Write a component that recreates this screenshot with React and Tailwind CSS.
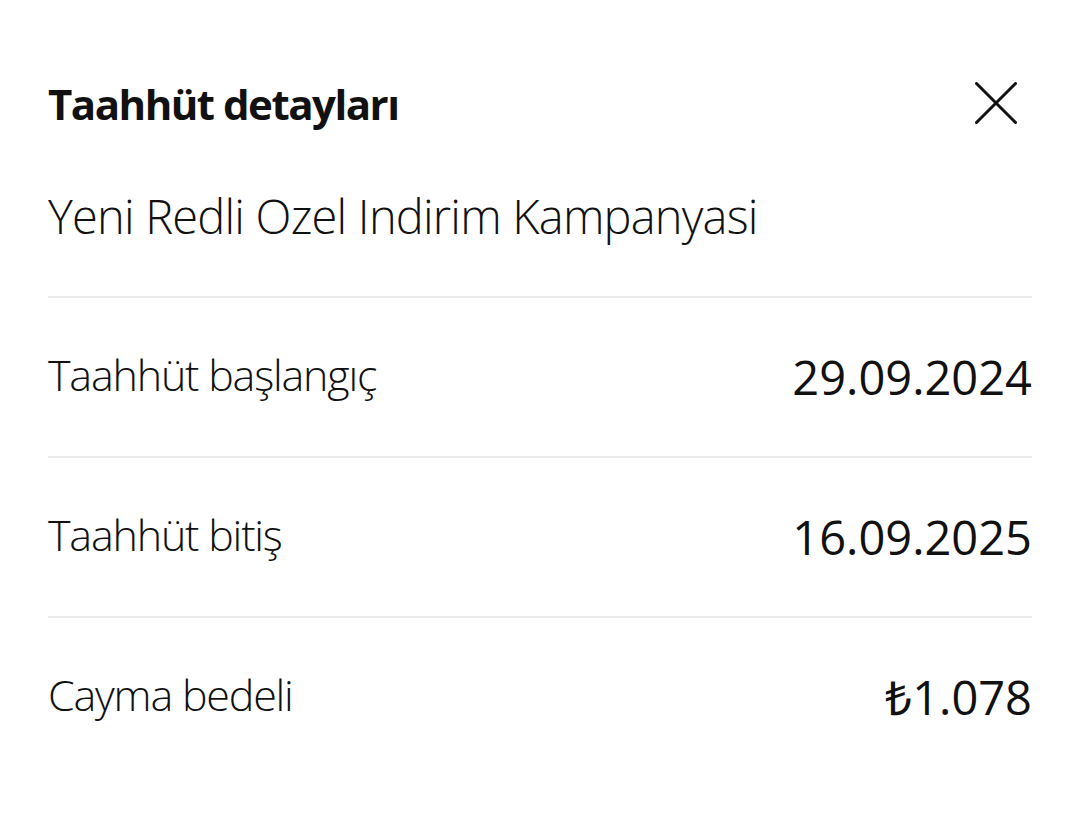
const rows = [
  { label: 'Taahhüt başlangıç', value: '29.09.2024' },
  { label: 'Taahhüt bitiş', value: '16.09.2025' },
  { label: 'Cayma bedeli', value: '₺1.078' },
];

function CloseIcon() {
  return (
    <svg width="42" height="42" viewBox="0 0 42 42" fill="none" stroke="#111" strokeWidth="3" strokeLinecap="round">
      <line x1="1.5" y1="1.5" x2="40.5" y2="40.5" />
      <line x1="40.5" y1="1.5" x2="1.5" y2="40.5" />
    </svg>
  );
}

export default function App() {
  return (
    <div className="w-[1080px] h-[828px] bg-white px-12 text-[#111] font-['Open_Sans',sans-serif]">
      {/* Header */}
      <div className="flex items-start justify-between pt-[82px]">
        <h2 className="text-[42px] leading-[43px] font-bold tracking-[-1.5px]">Taahhüt detayları</h2>
        <button className="mr-[15px]">
          <CloseIcon />
        </button>
      </div>

      <p className="mt-[67px] text-[47px] leading-[48px] font-light tracking-[-0.8px]">Yeni Redli Ozel Indirim Kampanyasi</p>

      {/* Details */}
      <div className="mt-[56px]">
        {rows.map((r, i) => (
          <div key={i} className="flex items-center justify-between h-[160px] border-t-2 border-[#ebebeb]">
            <span className="mb-[6px] text-[43px] leading-[45px] font-light tracking-[-1.2px]">{r.label}</span>
            <span className="text-[47px] leading-[47px] font-normal">{r.value}</span>
          </div>
        ))}
      </div>
    </div>
  );
}
